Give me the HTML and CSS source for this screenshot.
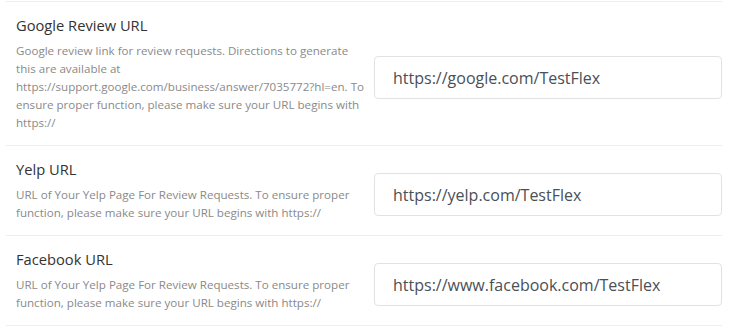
FILE: index.html
```html
<!DOCTYPE html>
<html lang="en">
<head>
    <meta charset="UTF-8">
    <meta name="viewport" content="width=device-width, initial-scale=1.0">
    <title>Review Settings</title>
    <link rel="stylesheet" href="styles.css">
</head>
<body>
    <div class="settings">
        <div class="setting-row">
            <div class="setting-info">
                <h3>Google Review URL</h3>
                <p>Google review link for review requests. Directions to generate this are available at https://support.google.com/business/answer/7035772?hl=en. To ensure proper function, please make sure your URL begins with https://</p>
            </div>
            <div class="setting-field">
                <input type="text" class="form-input" value="https://google.com/TestFlex">
            </div>
        </div>

        <div class="setting-row">
            <div class="setting-info">
                <h3>Yelp URL</h3>
                <p>URL of Your Yelp Page For Review Requests. To ensure proper function, please make sure your URL begins with https://</p>
            </div>
            <div class="setting-field">
                <input type="text" class="form-input" value="https://yelp.com/TestFlex">
            </div>
        </div>

        <div class="setting-row">
            <div class="setting-info">
                <h3>Facebook URL</h3>
                <p>URL of Your Yelp Page For Review Requests. To ensure proper function, please make sure your URL begins with https://</p>
            </div>
            <div class="setting-field">
                <input type="text" class="form-input" value="https://www.facebook.com/TestFlex">
            </div>
        </div>
    </div>
</body>
</html>
```

FILE: styles.css
```css
/* page */
body {
    margin: 0;
    background: #ffffff;
    font-family: "Open Sans", "Noto Sans", sans-serif;
    color: #333;
}

.settings {
    width: 716px;
    margin-left: 6px;
    margin-top: 1px;
    border-top: 1px solid #eeeeee;
}

/* one setting per row */
.setting-row {
    display: flex;
    align-items: center;
    border-bottom: 1px solid #eeeeee;
}

.setting-info {
    width: 350px;
    padding: 13px 2px 13px 10px;
}

.setting-info h3 {
    margin: 0 0 7px 0;
    font-size: 14.7px;
    font-weight: normal;
    color: #333;
    line-height: 20px;
}

.setting-info p {
    margin: 0;
    font-size: 11.6px;
    line-height: 18px;
    color: #8a8a8a;
}

.setting-field {
    flex: 1;
    padding-left: 6px;
    padding-top: 8px;
}

.form-input {
    box-sizing: border-box;
    width: 100%;
    height: 43px;
    padding: 0 18px;
    border: 1px solid #e2e2e2;
    border-radius: 4px;
    font-family: inherit;
    font-size: 16px;
    color: #495057;
    background: #fff;
    outline: none;
}
```
